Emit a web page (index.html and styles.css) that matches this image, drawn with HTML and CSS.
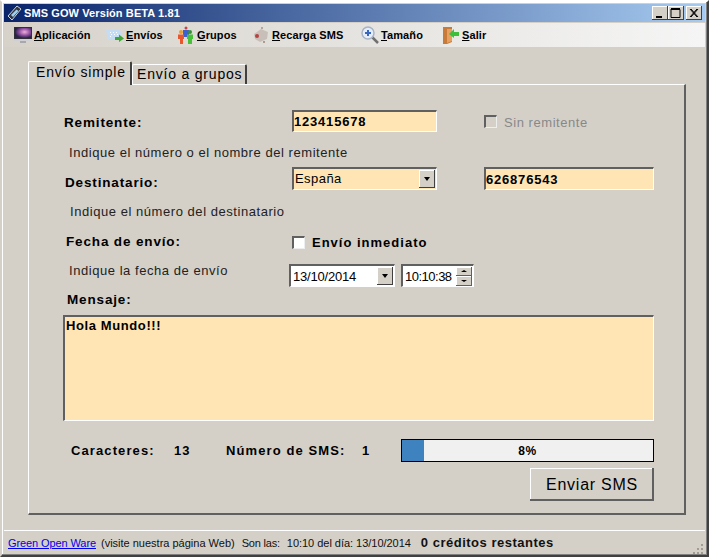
FILE: index.html
```html
<!DOCTYPE html>
<html lang="es">
<head>
    <meta charset="UTF-8">
    <title>SMS GOW Versión BETA 1.81</title>
    <link rel="stylesheet" href="styles.css">
</head>
<body>
<div class="window">
    <div class="titlebar">
        <svg class="title-icon" width="17" height="17" viewBox="0 0 17 17">
            <path d="M2 11 L11 1 L15 4 L6 15 Z" fill="#30343c" stroke="#c8d4e0" stroke-width="1"/>
            <path d="M5 10 L10.500 4.500 L12.500 6 L7 12 Z" fill="#9fd0f0"/>
        </svg>
        <span class="title-text">SMS GOW Versión BETA 1.81</span>
        <div class="caption-btns">
            <div class="caption-btn"><svg width="15" height="14"><rect x="4" y="10" width="6" height="2" fill="#000"/></svg></div>
            <div class="caption-btn"><svg width="15" height="14"><path d="M3 2.500H12M3 3.500H12V11.500H3V3" fill="none" stroke="#000"/></svg></div>
            <div class="caption-btn close"><svg width="15" height="14"><path d="M4 3 L11 11 M5 3 L12 11 M11 3 L4 11 M12 3 L5 11" stroke="#000"/></svg></div>
        </div>
    </div>

    <div class="menubar">
        <div class="menu-item item-app">
            <svg width="20" height="20" viewBox="0 0 20 20">
                <defs>
                    <radialGradient id="galaxy" cx="0.6" cy="0.4" r="0.6">
                        <stop offset="0" stop-color="#f0b0dc"/>
                        <stop offset="0.6" stop-color="#8a4a9c"/>
                        <stop offset="1" stop-color="#2c2448"/>
                    </radialGradient>
                </defs>
                <rect x="1" y="2" width="18" height="12" fill="#30303a"/>
                <rect x="2" y="3" width="16" height="10" fill="url(#galaxy)"/>
                <rect x="1" y="14" width="18" height="2" fill="#d0d0d4"/>
                <rect x="7" y="16" width="6" height="2" fill="#a8a8ac"/>
            </svg>
            <span><u>A</u>plicación</span>
        </div>
        <div class="menu-item item-envios">
            <svg width="20" height="20" viewBox="0 0 20 20">
                <path d="M1 5 H15 L17 11 L16 14 H3 Z" fill="#c4dcf4"/>
                <path d="M5 7h1v1H5zM8 7h1v1H8zM11 7h1v1h-1zM6 9h1v1H6zM9 9h1v1H9zM12 9h1v1h-1zM5 11h1v1H5z" fill="#fff"/>
                <path d="M10 12 H14 V9.500 L19 13.500 L14 17 V15 H10 Z" fill="#3fa63a"/>
            </svg>
            <span><u>E</u>nvíos</span>
        </div>
        <div class="menu-item item-grupos">
            <svg width="20" height="20" viewBox="0 0 20 20">
                <circle cx="10" cy="3" r="1.500" fill="#d04040"/>
                <rect x="7" y="5" width="6" height="7" fill="#3a62d0"/>
                <circle cx="5" cy="7" r="2" fill="#e8a030"/>
                <path d="M2 9.500H8V14H7V19H4V14H2Z" fill="#e8582c"/>
                <circle cx="14" cy="7" r="2" fill="#3a9030"/>
                <path d="M11 9.500H17V14H16V19H12V14H11Z" fill="#48c038"/>
            </svg>
            <span><u>G</u>rupos</span>
        </div>
        <div class="menu-item item-recarga">
            <svg width="20" height="20" viewBox="0 0 20 20">
                <path d="M3 9 L10 4 L17 7 L16 14 L9 17 L4 14 Z" fill="#c8c0b8"/>
                <circle cx="6" cy="11" r="2" fill="#b84040"/>
                <circle cx="11" cy="3" r="1" fill="#a89088"/>
                <circle cx="13" cy="17" r="1" fill="#a08078"/>
            </svg>
            <span><u>R</u>ecarga SMS</span>
        </div>
        <div class="menu-item item-tamano">
            <svg width="20" height="20" viewBox="0 0 20 20">
                <path d="M12 12 L18 18" stroke="#707070" stroke-width="2.500"/>
                <circle cx="8" cy="8" r="6" fill="#e4eefa" stroke="#a8b4c4" stroke-width="1.500"/>
                <path d="M5 8 H11 M8 5 V11" stroke="#3a66c0" stroke-width="2"/>
            </svg>
            <span><u>T</u>amaño</span>
        </div>
        <div class="menu-item item-salir">
            <svg width="20" height="20" viewBox="0 0 20 20">
                <path d="M2 2 H11 V17 L6 19 H2 Z" fill="#c87a38"/>
                <path d="M6 4 H11 V16 L6 18 Z" fill="#e8a060"/>
                <path d="M18 7 H13 V4 L8 9 L13 13 V11 H18 Z" fill="#3cc03c"/>
            </svg>
            <span><u>S</u>alir</span>
        </div>
    </div>

    <div class="client">
        <div class="tabs">
            <div class="tab active">Envío simple</div>
            <div class="tab">Envío a grupos</div>
        </div>
        <div class="panel">
            <div class="row row-remitente">
                <label class="field-label lbl-remitente">Remitente:</label>
                <div class="input width-145"><b>123415678</b></div>
                <div class="check disabled"></div>
                <span class="check-text disabled-text">Sin remitente</span>
            </div>
            <div class="hint hint-remitente">Indique el número o el nombre del remitente</div>

            <div class="row row-destino">
                <label class="field-label lbl-destino">Destinatario:</label>
                <div class="input combo width-145">
                    <span class="combo-text">España</span>
                    <div class="drop-btn"><i class="arrow"></i></div>
                </div>
                <div class="input width-170"><b>626876543</b></div>
            </div>
            <div class="hint hint-destino">Indique el número del destinatario</div>

            <div class="row row-fecha">
                <label class="field-label lbl-fecha">Fecha de envío:</label>
                <div class="check"></div>
                <span class="check-text strong">Envío inmediato</span>
            </div>
            <div class="row row-date">
                <div class="hint hint-fecha">Indique la fecha de envío</div>
                <div class="input white date">
                    <span class="date-text">13/10/2014</span>
                    <div class="drop-btn"><i class="arrow"></i></div>
                </div>
                <div class="input white time">
                    <span class="date-text">10:10:38</span>
                    <div class="spin">
                        <div class="spin-btn"><i class="arrow up"></i></div>
                        <div class="spin-btn"><i class="arrow"></i></div>
                    </div>
                </div>
            </div>
            <div class="field-label lbl-mensaje">Mensaje:</div>
            <div class="input message"><b>Hola Mundo!!!</b></div>

            <div class="row row-stats">
                <span class="stat stat-chars">Caracteres:</span>
                <span class="stat stat-chars-val">13</span>
                <span class="stat stat-sms">Número de SMS:</span>
                <span class="stat stat-sms-val">1</span>
                <div class="progress">
                    <div class="progress-fill" style="width: 8.800%"></div>
                    <span class="progress-text">8%</span>
                </div>
            </div>
            <div class="send-row">
                <button class="send-btn">Enviar SMS</button>
            </div>
        </div>
    </div>

    <div class="statusbar">
        <a class="status-link" href="#">Green Open Ware</a>
        <span class="status-visit">(visite nuestra página Web)</span>
        <span class="status-son">Son las:</span>
        <span class="status-time">10:10 del día: 13/10/2014</span>
        <span class="status-credits">0 créditos restantes</span>
        <svg class="grip" width="12" height="12" viewBox="0 0 12 12">
            <path d="M9 2h2v2H9zM5 6h2v2H5zM9 6h2v2H9zM1 10h2v2H1zM5 10h2v2H5zM9 10h2v2H9z" fill="#a09c94"/>
        </svg>
    </div>
</div>
</body>
</html>
```

FILE: styles.css
```css
html, body { margin: 0; padding: 0; }
body { width: 709px; height: 557px; overflow: hidden; background: #d4d0c8; font-family: "Liberation Sans", Arial, sans-serif; color: #000; }

.window { box-sizing: border-box; width: 709px; height: 557px; display: flex; flex-direction: column; padding: 2px 2px 1px; background: #d4d0c8;
    border-style: solid; border-width: 2px; border-color: #fff #404040 #404040 #d4d0c8; box-shadow: inset -1px -1px 0 #808080, inset 1px 1px 0 #fff; }

.titlebar { height: 18px; flex: none; display: flex; align-items: center; background: linear-gradient(to right, #0a246a, #a6caf0); color: #fff; }
.title-icon { margin: 0 1px 0 2px; }
.title-text { font-size: 11px; font-weight: bold; letter-spacing: 0.1px; }
.caption-btns { margin-left: auto; display: flex; margin-right: 3px; }
.caption-btn { box-sizing: border-box; width: 16px; height: 14px; background: #d4d0c8; box-shadow: inset -1px -1px 0 #404040, inset 1px 1px 0 #fff; }
.caption-btn svg { display: block; }
.caption-btn.close { margin-left: 2px; }

.menubar { height: 24px; margin-top: 1px; padding-left: 9px; flex: none; display: flex; align-items: center; background: linear-gradient(to right, #d6d2ca, #f5f5f5); font-size: 11px; font-weight: bold; }
.menu-item { display: flex; align-items: center; gap: 1px; letter-spacing: 0.1px; }
.item-app { width: 92px; }
.item-envios { width: 71px; }
.item-grupos { width: 75px; }
.item-recarga { width: 109px; }
.item-tamano { width: 81px; }

.client { flex: 1; padding: 14px 0 0 24px; }
.tabs { display: flex; align-items: flex-end; height: 23px; font-size: 14px; letter-spacing: 0.8px; position: relative; z-index: 1; }
.tab { box-sizing: border-box; height: 20px; padding: 1px 0 0 4px; width: 115px; background: #d4d0c8; border-top: 1px solid #fff; border-left: 1px solid #fff; border-right: 2px solid #404040; border-radius: 2px 2px 0 0; white-space: nowrap; }
.tab.active { height: 24px; width: 104px; margin-bottom: -1px; padding: 2px 0 0 7px; }

.panel { box-sizing: border-box; width: 658px; height: 431px; padding: 25px 0 0 34px; border-style: solid; border-width: 1px 2px 2px 1px; border-color: #fff #606060 #606060 #fff; }

.row { display: flex; align-items: center; }
.field-label { font-size: 13.500px; letter-spacing: 0.85px; font-weight: bold; }
.row-remitente { height: 22px; }
.lbl-remitente { width: 228px; padding: 2px 0 0 1px; }
.row-destino { height: 23px; margin-top: 6px; }
.lbl-destino { width: 227px; padding: 7px 0 0 2px; }
.row-fecha { height: 20px; margin-top: 12px; }
.lbl-fecha { width: 226px; padding: 0 0 2px 3px; }
.row-date { height: 23px; margin-top: 12px; }
.lbl-mensaje { margin: 4px 0 0 4px; height: 17px; line-height: 18px; }

.hint { font-size: 13px; letter-spacing: 0.55px; color: #222; height: 18px; line-height: 20px; }
.hint-remitente { margin: 11px 0 0 6px; }
.hint-destino { margin: 12px 0 0 7px; }
.hint-fecha { width: 220px; margin: -11px 0 0 6px; }

.input { box-sizing: border-box; height: 22px; display: flex; align-items: center; background: #ffe4b4; font-size: 13px; letter-spacing: 0.8px; border-style: solid; border-width: 2px 1px 1px 2px; border-color: #606060 #fff #fff #606060; }
.width-145 { width: 145px; margin-right: 47px; }
.width-170 { width: 170px; height: 23px; }
.combo { height: 23px; justify-content: space-between; padding: 0 1px; }
.combo-text { font-size: 13px; letter-spacing: 0.45px; padding-bottom: 2px; }
.white { background: #fff; height: 23px; justify-content: space-between; padding: 0 1px 0 2px; }
.date-text { font-size: 13px; letter-spacing: -0.2px; }
.date { width: 106px; margin-right: 6px; }
.time { width: 73px; }
.time .date-text { letter-spacing: -0.5px; }
.message { width: 591px; height: 106px; margin-top: 7px; padding: 1px 0 0 1px; align-items: flex-start; letter-spacing: 0.6px; }

.drop-btn { box-sizing: border-box; width: 16px; height: 18px; display: flex; align-items: center; justify-content: center; background: #d4d0c8; box-shadow: inset -1px -1px 0 #404040, inset 1px 1px 0 #fff; }
.arrow { display: block; width: 0; height: 0; border-left: 3.500px solid transparent; border-right: 3.500px solid transparent; border-top: 4px solid #000; }
.arrow.up { border-top: 0; border-bottom: 3px solid #000; }
.spin { width: 16px; display: flex; flex-direction: column; }
.spin-btn { box-sizing: border-box; height: 9.500px; display: flex; align-items: center; justify-content: center; background: #d4d0c8; box-shadow: inset -1px -1px 0 #606060, inset 1px 1px 0 #fff; }
.spin-btn .arrow { border-left-width: 3px; border-right-width: 3px; border-top-width: 2px; }
.spin-btn .arrow.up { border-top-width: 0; border-bottom-width: 2px; }

.check { box-sizing: border-box; width: 13px; height: 13px; background: #fff; border-style: solid; border-width: 2px 1px 1px 2px; border-color: #606060 #eee #eee #606060; }
.check.disabled { background: #d4d0c8; }
.check-text { margin-left: 7px; font-size: 13px; letter-spacing: 0.55px; }
.strong { font-weight: bold; letter-spacing: 1px; }
.disabled-text { color: #888; padding-top: 3px; }

.row-stats { height: 23px; margin-top: 18px; font-size: 13px; font-weight: bold; letter-spacing: 1.1px; }
.stat-chars { margin-left: 8px; width: 103px; }
.stat-chars-val { width: 52px; }
.stat-sms { width: 136px; }
.stat-sms-val { width: 39px; }
.progress { box-sizing: border-box; width: 253px; height: 23px; position: relative; border: 1px solid #000; background: #f0f0f0; display: flex; align-items: center; justify-content: center; letter-spacing: 0.5px; }
.progress-fill { position: absolute; left: 0; top: 0; bottom: 0; background: #3f82c0; }
.progress-text { position: relative; font-size: 12px; }

.send-row { display: flex; justify-content: flex-end; width: 591px; margin-top: 6px; }
.send-btn { box-sizing: border-box; width: 124px; height: 33px; padding: 0; background: #d4d0c8; border: 0; font: 16px "Liberation Sans", Arial, sans-serif; letter-spacing: 0.75px; color: #000; box-shadow: inset -2px -2px 0 #606060, inset 1px 1px 0 #fff; }

.statusbar { flex: none; height: 23px; display: flex; align-items: center; border-top: 1px solid #fff; font-size: 11px; padding-left: 4px; color: #111; }
.status-link { color: #0000ee; letter-spacing: -0.1px; }
.status-visit { margin-left: 5px; }
.status-son { margin-left: 7px; letter-spacing: -0.2px; }
.status-time { margin-left: 7px; letter-spacing: -0.03px; }
.status-credits { margin-left: 10px; font-size: 13px; font-weight: bold; letter-spacing: 0.5px; }
.grip { margin-left: auto; margin-right: 1px; align-self: flex-end; }
```
